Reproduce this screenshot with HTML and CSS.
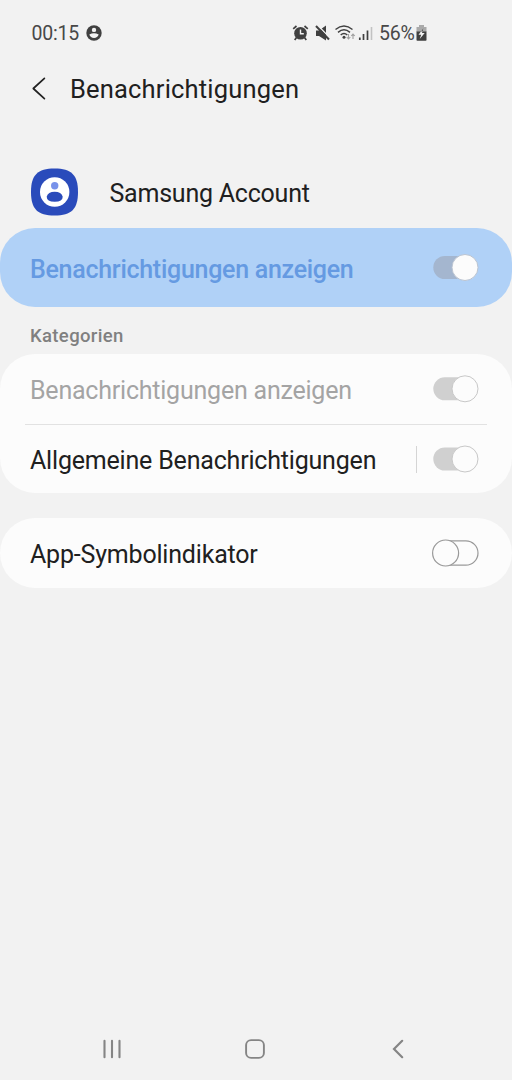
FILE: index.html
```html
<!DOCTYPE html>
<html lang="de">
<head>
<meta charset="utf-8">
<title>Benachrichtigungen</title>
<link rel="stylesheet" href="styles.css">
</head>
<body>
<div class="screen">
  <div class="status">
    <span class="clock">00:15</span>
    <svg class="status-user" width="16" height="16" viewBox="0 0 16 16"><circle cx="8" cy="8" r="7.7" fill="#404040"/><circle cx="8" cy="4.9" r="2.2" fill="#f2f2f2"/><path d="M3.3 9.6Q8 6.8 12.7 9.6Q11.5 13 8 13Q4.500 13 3.300 9.600Z" fill="#f2f2f2"/></svg>
    <svg class="status-icons" width="82" height="18" viewBox="0 0 82 18" fill="none" stroke="#404040">
      <circle cx="8.500" cy="9.200" r="6.300" fill="#404040" stroke="none"/>
      <path d="M8.500 5.500v4.200h3.300" stroke="#f2f2f2" stroke-width="1.400"/>
      <path d="M1.200 4.800 4.500 2M12.500 2 15.800 4.800M4.500 13.500 2.700 16M12.500 13.500l1.800 2.500" stroke-width="1.700"/>
      <path d="M24 6.500h3L34 1.500v15L27 12H24z" fill="#404040" stroke="none"/>
      <path d="M25.500 1 38.500 14.500" stroke="#f2f2f2" stroke-width="1.200"/>
      <path d="M24 2 37 15.500" stroke-width="2"/>
      <path d="M43.500 5.500Q52 -1.500 60.500 5.500M46 8.300Q52 3.300 58 8.300M48.700 11Q52 8 55.300 11" stroke-width="1.500"/>
      <circle cx="52" cy="13.300" r="1.500" fill="#404040" stroke="none"/>
      <path d="M56.500 10v5M54.700 13l1.800 2 1.800-2M61 15v-5M59.200 12l1.800-2 1.800 2" stroke="#a0a0a0" stroke-width="1.100"/>
      <path d="M67.800 13.500v2.500M71.500 10v6M75.500 6.500v9.500" stroke-width="1.700"/>
      <path d="M79.500 3v13" stroke="#c2c2c2" stroke-width="1.600"/>
    </svg>
    <span class="percent">56%</span>
    <svg class="battery" width="11" height="16" viewBox="0 0 11 16"><path d="M3 0h5v2h2.500v5h-10V2H3z" fill="#aaa"/><path d="M.5 6.500h10V15q0 .8-.8.800H1.300q-.8 0-.8-.8z" fill="#404040"/><path d="M7.500 3 2.500 9.700h2.700L3.700 14 8.700 8H6z" fill="#f2f2f2"/><path d="M7.500 3 5 6.500h1.500z" fill="#404040"/></svg>
  </div>
  <header class="header">
    <svg class="back" width="14" height="24" viewBox="0 0 14 24"><path d="M12.400 1.300 1.300 11.500 12.400 21.700" fill="none" stroke="#222" stroke-width="1.700" stroke-linecap="round" stroke-linejoin="round"/></svg>
    <h1 class="title">Benachrichtigungen</h1>
  </header>
  <div class="app">
    <svg class="app-icon" width="48" height="48" viewBox="0 0 48 48"><path d="M23.500 .5C40.500 .5 47 7 47 24S40.500 47.500 23.500 47.500 0 41 0 24 6.500 .5 23.500 .5Z" fill="#2a4bbb"/><circle cx="23.700" cy="24" r="14.700" fill="#fff"/><circle cx="23.700" cy="17.700" r="3.700" fill="#7892ea"/><path d="M15.700 28.700Q17 23.700 23.700 23.700T31.700 28.700Q31.700 33.700 23.700 33.700T15.700 28.700Z" fill="#2a4bbb"/></svg>
    <span class="app-name">Samsung Account</span>
  </div>
  <section class="card master">
    <span class="label master-label">Benachrichtigungen anzeigen</span>
    <svg class="toggle" width="48" height="28" viewBox="0 0 48 28"><rect x="1.300" y="2" width="44.500" height="23" rx="11.500" fill="#a4b6cf"/><circle cx="33" cy="13.500" r="13" fill="#fcfcfc" stroke="#bbc4d1"/></svg>
  </section>
  <h2 class="caption">Kategorien</h2>
  <section class="card categories">
    <div class="row">
      <span class="label dim">Benachrichtigungen anzeigen</span>
      <svg class="toggle" width="48" height="28" viewBox="0 0 48 28"><rect x="1.300" y="2.300" width="44.500" height="23" rx="11.500" fill="#d0d0d0"/><circle cx="33" cy="13.800" r="13" fill="#fcfcfc" stroke="#c8c8c8"/></svg>
    </div>
    <div class="divider"></div>
    <div class="row last">
      <span class="label">Allgemeine Benachrichtigungen</span>
      <span class="separator"></span>
      <svg class="toggle" width="48" height="28" viewBox="0 0 48 28"><rect x="1.300" y="2.500" width="44.500" height="23" rx="11.500" fill="#d0d0d0"/><circle cx="33" cy="14" r="13" fill="#fcfcfc" stroke="#c8c8c8"/></svg>
    </div>
  </section>
  <section class="card indicator">
    <span class="label">App-Symbolindikator</span>
    <svg class="toggle" width="48" height="28" viewBox="0 0 48 28"><rect x="1.500" y="1.800" width="44.500" height="24.400" rx="12.200" fill="none" stroke="#999" stroke-width="1.200"/><circle cx="13.600" cy="14" r="13" fill="#fcfcfc" stroke="#999" stroke-width="1.200"/></svg>
  </section>
  <nav class="nav">
    <svg width="20" height="20" viewBox="0 0 20 20"><path d="M2.500 1.800v16.400M10 1.800v16.400M17.500 1.800v16.400" stroke="#858585" stroke-width="2.100" stroke-linecap="round"/></svg>
    <svg class="home" width="20" height="20" viewBox="0 0 20 20"><rect x="1.100" y="1.100" width="17.800" height="17.800" rx="5" fill="none" stroke="#858585" stroke-width="1.900"/></svg>
    <svg width="12" height="20" viewBox="0 0 12 20"><path d="M10.200 1.800 2 10l8.200 8.200" fill="none" stroke="#858585" stroke-width="2.200" stroke-linecap="round"/></svg>
  </nav>
</div>
</body>
</html>
```
FILE: styles.css
```css
* { box-sizing: border-box; }
body { margin: 0; background: #f2f2f2; font-family: Roboto, "Liberation Sans", sans-serif; color: #202020; }
svg { display: block; flex: none; }
h1, h2 { margin: 0; font-weight: 400; }
.screen { display: flex; flex-direction: column; width: 512px; height: 1080px; white-space: nowrap; }
.status { display: flex; align-items: center; height: 66px; padding-left: 31px; color: #484848; font-size: 19.500px; letter-spacing: -0.2px; }
.clock { width: 55px; padding-left: 0.5px; }
.status-icons { margin-left: 190px; }
.percent { width: 36px; margin-left: 5px; }
.battery { margin-left: 1px; }
.header { display: flex; align-items: center; height: 46px; padding-left: 32px; }
.title { margin-left: 24px; font-size: 25.500px; line-height: 46px; letter-spacing: 0.18px; }
.app { display: flex; align-items: center; height: 72px; margin-top: 44px; padding-left: 31px; }
.app-name { margin-left: 30.500px; padding-top: 2px; font-size: 25px; letter-spacing: -0.23px; }
.card { background: #fcfcfc; border-radius: 35px; }
.label { flex: 1; padding-top: 3px; font-size: 25px; letter-spacing: -0.19px; }
.toggle { margin-left: auto; }
.master, .row, .indicator { display: flex; align-items: center; padding: 0 32px 0 30px; }
.master { height: 79px; background: #b0d1f7; }
.master-label { color: #659ae2; font-weight: 500; letter-spacing: -0.28px; }
.caption { height: 47px; padding: 6px 0 0 30px; color: #808080; font-size: 18.500px; font-weight: 500; line-height: 47px; letter-spacing: 0.35px; }
.categories { height: 139px; }
.row { height: 70px; }
.last { height: 68px; }
.dim { color: #a4a4a4; letter-spacing: -0.22px; }
.divider { height: 1px; margin: 0 25px; background: #e2e2e2; }
.separator { width: 1px; height: 27px; margin-right: 15px; background: #d5d5d5; }
.indicator { height: 70px; margin-top: 25px; }
.nav { display: flex; align-items: center; height: 20px; margin-top: 451px; padding-left: 102px; }
.home { margin: 0 127px 0 123px; }
```
